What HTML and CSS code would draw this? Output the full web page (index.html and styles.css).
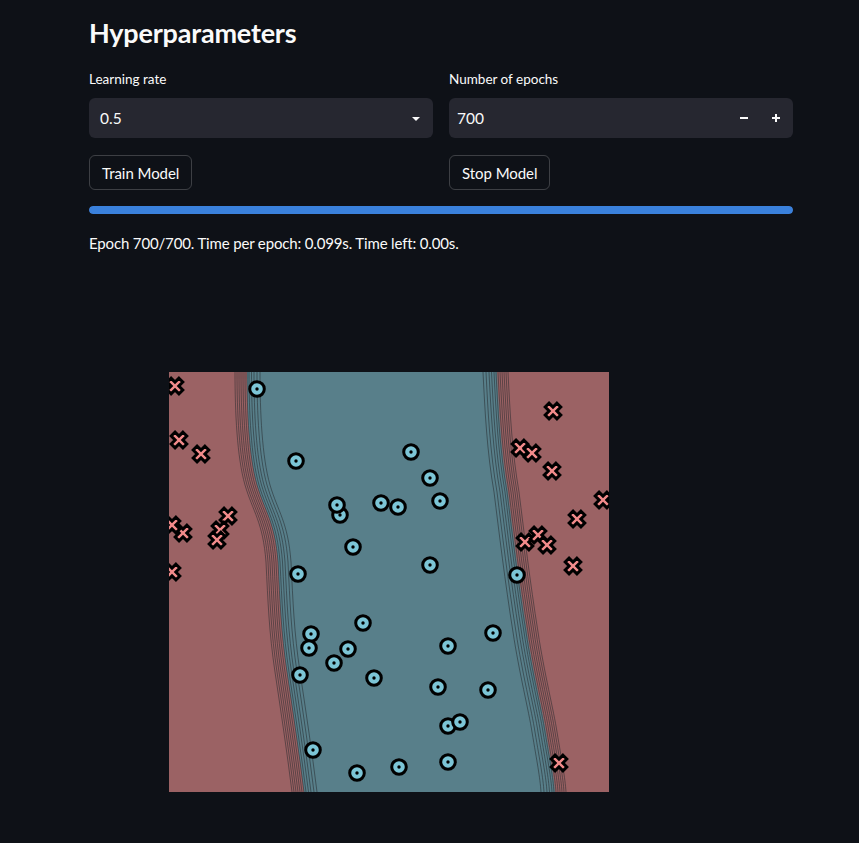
FILE: index.html
```html
<!DOCTYPE html>
<html>
<head>
<meta charset="utf-8">
<link rel="stylesheet" href="styles.css">
</head>
<body>
<main class="main">
  <h2 class="title">Hyperparameters</h2>
  <div class="row">
    <div class="col">
      <label class="label">Learning rate</label>
      <div class="field select">
        <span class="value">0.5</span>
        <svg class="caret" width="10" height="6" viewBox="0 0 10 6"><path d="M1 1h8L5 5z" fill="#fafafa"/></svg>
      </div>
      <button class="btn">Train Model</button>
    </div>
    <div class="col">
      <label class="label">Number of epochs</label>
      <div class="field number">
        <span class="value num">700</span>
        <span class="step">
          <svg width="12" height="12" viewBox="0 0 12 12"><path d="M2 6h8" stroke="#fafafa" stroke-width="2"/></svg>
        </span>
        <span class="step">
          <svg width="12" height="12" viewBox="0 0 12 12"><path d="M2 6h8M6 2v8" stroke="#fafafa" stroke-width="2"/></svg>
        </span>
      </div>
      <button class="btn">Stop Model</button>
    </div>
  </div>
  <div class="progress"><div class="bar" style="width:100%"></div></div>
  <p class="status">Epoch 700/700. Time per epoch: 0.099s. Time left: 0.00s.</p>

  <div class="figure">
    <svg class="plot" width="440" height="420" viewBox="0 0 440 420">
      <defs>
        <g id="o">
          <circle r="7.3" fill="#7cc5d6" stroke="#000" stroke-width="3"/>
          <circle r="1.7" fill="#000"/>
        </g>
        <polygon id="x" transform="rotate(45)" fill="#f28b8b" stroke="#000" stroke-width="3" stroke-linejoin="miter"
          points="-2.7,-8.3 2.7,-8.3 2.7,-2.7 8.3,-2.7 8.3,2.7 2.7,2.7 2.7,8.3 -2.7,8.3 -2.7,2.7 -8.3,2.7 -8.3,-2.7 -2.7,-2.7"/>
        <path id="lc" d="M66 0 C66 40 68 85 76 113 C84 140 94 150 97 190 C99 230 100 260 106 300 C112 340 118 380 123 420" fill="none"/>
        <path id="rc" d="M314 0 C316 40 318 80 325 120 C330 160 336 210 344 260 C350 300 360 340 363 360 C368 390 371 405 372 420" fill="none"/>
      </defs>
      <rect width="440" height="420" fill="#9b6264"/>
      <path d="M78 0 C78 40 80 85 88 113 C96 140 106 150 109 190 C111 230 112 260 118 300 C124 340 130 380 135 420
               L386 420 C385 405 382 390 377 360 C374 340 364 300 358 260 C350 210 344 160 339 120 C332 80 330 40 328 0 Z" fill="#587f8a"/>
      <g stroke="#22262b" stroke-width="0.7" stroke-opacity="0.75" fill="none">
        <use href="#lc" x="0"/><use href="#lc" x="2"/><use href="#lc" x="4"/><use href="#lc" x="6"/>
        <use href="#lc" x="8"/><use href="#lc" x="10"/><use href="#lc" x="12"/><use href="#lc" x="14"/>
        <use href="#lc" x="16.5"/><use href="#lc" x="19"/><use href="#lc" x="22"/><use href="#lc" x="25"/>
        <use href="#rc" x="0"/><use href="#rc" x="3"/><use href="#rc" x="6"/><use href="#rc" x="8.5"/>
        <use href="#rc" x="11"/><use href="#rc" x="13"/><use href="#rc" x="15"/><use href="#rc" x="17"/>
        <use href="#rc" x="19"/><use href="#rc" x="21"/><use href="#rc" x="23"/><use href="#rc" x="25"/>
      </g>
      <g>
        <use href="#o" x="88" y="17"/><use href="#o" x="127" y="89"/><use href="#o" x="242" y="80"/>
        <use href="#o" x="261" y="106"/><use href="#o" x="171" y="143"/><use href="#o" x="168" y="133"/>
        <use href="#o" x="212" y="131"/><use href="#o" x="229" y="135"/><use href="#o" x="271" y="129"/>
        <use href="#o" x="184" y="175"/><use href="#o" x="129" y="202"/><use href="#o" x="261" y="193"/>
        <use href="#o" x="348" y="203"/><use href="#o" x="194" y="251"/><use href="#o" x="142" y="262"/>
        <use href="#o" x="140" y="276"/><use href="#o" x="179" y="277"/><use href="#o" x="165" y="291"/>
        <use href="#o" x="324" y="261"/><use href="#o" x="279" y="274"/><use href="#o" x="131" y="303"/>
        <use href="#o" x="205" y="306"/><use href="#o" x="269" y="315"/><use href="#o" x="319" y="318"/>
        <use href="#o" x="279" y="354"/><use href="#o" x="291" y="350"/><use href="#o" x="144" y="378"/>
        <use href="#o" x="188" y="401"/><use href="#o" x="230" y="395"/><use href="#o" x="279" y="390"/>
      </g>
      <g>
        <use href="#x" x="6" y="14"/><use href="#x" x="10" y="68"/><use href="#x" x="32" y="82"/>
        <use href="#x" x="59" y="144"/><use href="#x" x="14" y="161"/><use href="#x" x="51" y="158"/>
        <use href="#x" x="48" y="168"/><use href="#x" x="3" y="153"/><use href="#x" x="3" y="200"/>
        <use href="#x" x="384" y="39"/><use href="#x" x="351" y="76"/><use href="#x" x="363" y="81"/>
        <use href="#x" x="383" y="99"/><use href="#x" x="434" y="128"/><use href="#x" x="408" y="147"/>
        <use href="#x" x="356" y="170"/><use href="#x" x="369" y="163"/><use href="#x" x="378" y="173"/>
        <use href="#x" x="404" y="194"/><use href="#x" x="390" y="391"/>
      </g>
    </svg>
  </div>
</main>
</body>
</html>
```

FILE: styles.css
```css
* { box-sizing: border-box; }
html, body {
  margin: 0;
  padding: 0;
  background: #0e1117;
  color: #fafafa;
  font-family: "Lato", "Noto Sans", sans-serif;
}
.main {
  width: 704px;
  margin-left: 89px;
  padding-top: 16px;
}
.title {
  margin: 0;
  font-size: 27px;
  font-weight: 700;
  line-height: 34px;
  letter-spacing: -0.2px;
}
.row {
  display: flex;
  gap: 16px;
  margin-top: 21px;
}
.col {
  flex: 1;
  display: flex;
  flex-direction: column;
  align-items: flex-start;
}
.label {
  font-size: 13.5px;
  line-height: 16px;
  height: 16px;
  margin-bottom: 11px;
}
.field {
  width: 100%;
  height: 40px;
  background: #262730;
  border-radius: 6px;
  display: flex;
  align-items: center;
}
.select {
  padding: 0 12px 0 11px;
  justify-content: space-between;
}
.number {
  padding: 0 1px 0 8px;
}
.value {
  font-size: 15.5px;
}
.num { flex: 1; }
.step {
  width: 32px;
  height: 40px;
  display: flex;
  align-items: center;
  justify-content: center;
}
.caret { margin-top: 1px; }
.btn {
  margin-top: 17px;
  height: 35px;
  padding: 0 12px;
  background: transparent;
  color: #fafafa;
  border: 1px solid rgba(250,250,250,0.2);
  border-radius: 6px;
  font-family: inherit;
  font-size: 15px;
  letter-spacing: -0.05px;
}
.progress {
  margin-top: 16px;
  height: 8px;
  border-radius: 4px;
  background: #262730;
  overflow: hidden;
}
.bar {
  height: 100%;
  background: #3a81dc;
  border-radius: 4px;
}
.status {
  margin: 19px 0 0;
  font-size: 15px;
  line-height: 20px;
  letter-spacing: -0.15px;
}
.figure {
  margin-top: 119px;
  padding-left: 80px;
}
.plot {
  display: block;
  overflow: hidden;
}
```
